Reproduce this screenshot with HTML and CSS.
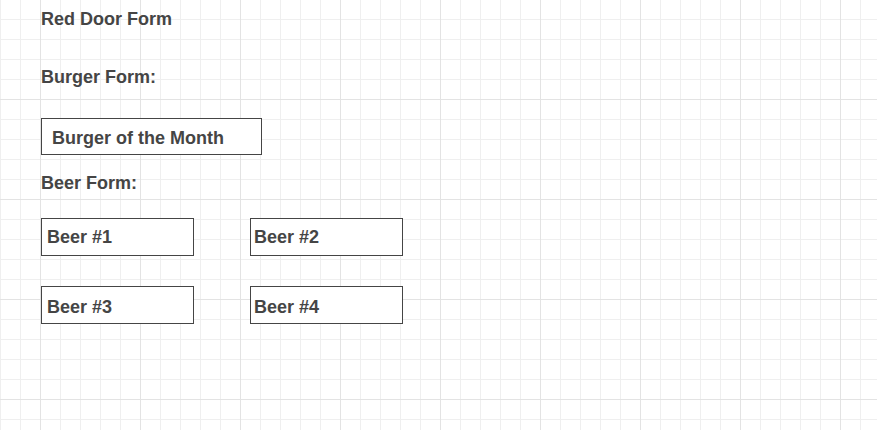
FILE: index.html
```html
<!DOCTYPE html>
<html lang="en">
<head>
<meta charset="utf-8">
<title>Red Door Form</title>
<link rel="stylesheet" href="styles.css">
</head>
<body>
<main class="page">
  <h1 class="title">Red Door Form</h1>
  <h2 class="section section-burger">Burger Form:</h2>
  <div class="field field-burger">Burger of the Month</div>
  <h2 class="section section-beer">Beer Form:</h2>
  <div class="beer-grid">
    <div class="field field-beer">Beer #1</div>
    <div class="field field-beer field-right">Beer #2</div>
    <div class="field field-beer field-low">Beer #3</div>
    <div class="field field-beer field-right field-low">Beer #4</div>
  </div>
</main>
</body>
</html>
```
FILE: styles.css
```css
html, body {
  margin: 0;
  padding: 0;
  height: 100%;
}
body {
  background-color: #ffffff;
  background-image:
    linear-gradient(to right, #e3e3e3 0, #e3e3e3 1px, transparent 1px),
    linear-gradient(to bottom, transparent 99px, #e3e3e3 99px, #e3e3e3 100px),
    linear-gradient(to right, #efefef 0, #efefef 1px, transparent 1px),
    linear-gradient(to bottom, transparent 19px, #efefef 19px, #efefef 20px);
  background-size: 100px 100px, 100px 100px, 20px 20px, 20px 20px;
  background-position: 40px 0, 0 0, 0 0, 0 0;
  font-family: "Liberation Sans", Arial, sans-serif;
  color: #454545;
}
.page {
  padding: 9px 0 0 41px;
  display: flex;
  flex-direction: column;
  align-items: flex-start;
}
.title, .section {
  margin: 0;
  font-size: 18px;
  font-weight: bold;
  line-height: 20px;
}
.section-burger {
  margin-top: 38px;
}
.field {
  box-sizing: border-box;
  background: #ffffff;
  border: 1px solid #454545;
  font-size: 18px;
  font-weight: bold;
  line-height: 20px;
  white-space: nowrap;
}
.field-burger {
  margin-top: 31px;
  width: 221px;
  height: 37px;
  padding: 9px 10px 0 10px;
}
.section-beer {
  margin-top: 18px;
}
.beer-grid {
  margin-top: 25px;
  display: grid;
  grid-template-columns: 153px 153px;
  column-gap: 56px;
  row-gap: 30px;
}
.field-beer {
  height: 38px;
  padding: 8px 5px 0 5px;
}
.field-right {
  padding-left: 3px;
}
.field-low {
  padding-top: 10px;
}
```
